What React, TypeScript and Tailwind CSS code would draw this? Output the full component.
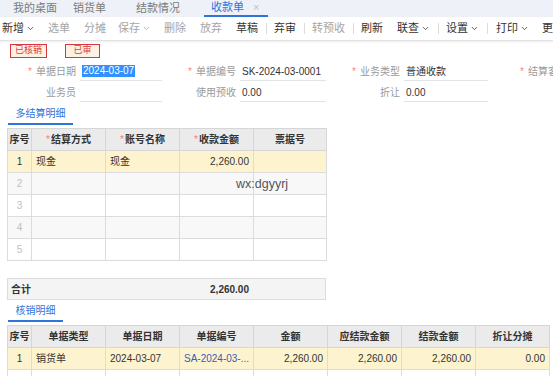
import { ChevronDown } from "lucide-react";

const tabs = [
  { label: "我的桌面", ml: "ml-[13px]" },
  { label: "销货单", ml: "ml-[16px]" },
  { label: "结款情况", ml: "ml-[30px]" },
];

type Tool = { label: string; ml: string; dim?: boolean; caret?: boolean; sep?: boolean };

const tools: Tool[] = [
  { label: "新增", ml: "ml-[2px]", caret: true },
  { label: "选单", ml: "ml-[13px]", dim: true },
  { label: "分摊", ml: "ml-[14px]", dim: true },
  { label: "保存", ml: "ml-[12px]", dim: true, caret: true },
  { label: "删除", ml: "ml-[13px]", dim: true },
  { label: "放弃", ml: "ml-[14px]", dim: true },
  { label: "草稿", ml: "ml-[14px]", sep: true },
  { label: "弃审", ml: "ml-[7px]", sep: true },
  { label: "转预收", ml: "ml-[7px]", dim: true, sep: true },
  { label: "刷新", ml: "ml-[7px]" },
  { label: "联查", ml: "ml-[14px]", caret: true, sep: true },
  { label: "设置", ml: "ml-[7px]", caret: true, sep: true },
  { label: "打印", ml: "ml-[8px]", caret: true },
  { label: "更多", ml: "ml-[13px]" },
];

function Field({ label, value, required, labelW, fieldW, selected }: {
  label: string;
  value?: string;
  required?: boolean;
  labelW: string;
  fieldW: string;
  selected?: boolean;
}) {
  return (
    <div className="flex items-center">
      <div className={`${labelW} shrink-0 pr-[4px] text-right text-[10px] text-[#9a9a9a]`}>
        {required && <span className="mr-[4px] text-[#f28b8b]">*</span>}
        {label}
      </div>
      <div className={`${fieldW} shrink-0 h-[19px] flex items-center border-b border-[#e3e3e3] pl-[2px] text-[10px] text-[#333]`}>
        {selected ? (
          <span className="bg-[#3390ff] px-[1px] text-white leading-[12px]">{value}</span>
        ) : (
          value
        )}
      </div>
    </div>
  );
}

function Head({ children, required }: { children: string; required?: boolean }) {
  return (
    <th className="h-[22px] border border-[#d6d6d6] bg-[#ebebeb] text-center text-[10px] font-bold text-[#333]">
      {required && <span className="mr-[1px] font-normal text-[#f08080]">*</span>}
      {children}
    </th>
  );
}

const cell = "h-[22px] border border-[#dcdcdc] px-[4px] text-[10px] whitespace-nowrap";

export default function App() {
  return (
    <div className="relative h-[376px] w-[553px] overflow-hidden bg-white font-['Liberation_Sans','Noto_Sans_CJK_SC',sans-serif] text-[10px] text-[#333]">
      {/* tab bar */}
      <div className="flex h-[17px] items-stretch bg-[#eef2f8] text-[11px] text-[#7a7a7a] whitespace-nowrap">
        {tabs.map((t) => (
          <span key={t.label} className={`${t.ml} flex items-center`}>
            {t.label}
          </span>
        ))}
        <span className="ml-[24px] flex w-[64px] items-center border-b-2 border-[#2f74d8] pl-[7px] text-[#2f74d8]">
          收款单
          <span className="ml-[9px] text-[11px] text-[#b8c2d0]">×</span>
        </span>
      </div>

      {/* toolbar */}
      <div className="flex h-[24px] items-center whitespace-nowrap border-b border-[#e2e2e2] text-[11px] shadow-[0_1px_2px_rgba(0,0,0,0.07)]">
        {tools.map((t) => (
          <div key={t.label} className={`${t.ml} flex items-center`}>
            <span className={t.dim ? "text-[#a5a5a5]" : "text-[#333]"}>{t.label}</span>
            {t.caret && <ChevronDown size={9} strokeWidth={2.5} className={`ml-[2px] ${t.dim ? "text-[#b0b0b0]" : "text-[#555]"}`} />}
            {t.sep && <span className="ml-[8px] h-[11px] w-px bg-[#dcdcdc]" />}
          </div>
        ))}
      </div>

      {/* status badges */}
      <div className="mt-[3px] flex h-[14px] items-stretch text-[9px] text-[#e03a3a]">
        <span className="ml-[10px] flex w-[37px] items-center justify-center border-[1.5px] border-[#d9363e] bg-[#fdf1e4]">已核销</span>
        <span className="ml-[18px] flex w-[35px] items-center justify-center border-[1.5px] border-[#d9363e] bg-[#fdf1e4]">已审</span>
      </div>

      {/* form */}
      <div className="mt-[4px] flex flex-col gap-[2px] whitespace-nowrap">
        <div className="flex">
          <Field label="单据日期" value="2024-03-07" required labelW="w-[80px]" fieldW="w-[82px]" selected />
          <Field label="单据编号" value="SK-2024-03-0001" required labelW="w-[78px]" fieldW="w-[86px]" />
          <Field label="业务类型" value="普通收款" required labelW="w-[78px]" fieldW="w-[84px]" />
          <Field label="结算客户" required labelW="w-[84px]" fieldW="w-[86px]" />
        </div>
        <div className="flex">
          <Field label="业务员" labelW="w-[80px]" fieldW="w-[82px]" />
          <Field label="使用预收" value="0.00" labelW="w-[78px]" fieldW="w-[86px]" />
          <Field label="折让" value="0.00" labelW="w-[78px]" fieldW="w-[84px]" />
        </div>
      </div>

      {/* 多结算明细 */}
      <div className="mt-[2px] flex h-[21px] pl-[8px]">
        <span className="flex w-[65px] items-center justify-center border-b-2 border-[#2f74d8] text-[#2f74d8]">多结算明细</span>
      </div>

      <table className="ml-[7px] mt-[3px] w-[319px] table-fixed border-collapse">
        <colgroup>
          <col className="w-[24px]" />
          <col className="w-[74px]" />
          <col className="w-[74px]" />
          <col className="w-[74px]" />
          <col className="w-[73px]" />
        </colgroup>
        <thead>
          <tr>
            <Head>序号</Head>
            <Head required>结算方式</Head>
            <Head required>账号名称</Head>
            <Head required>收款金额</Head>
            <Head>票据号</Head>
          </tr>
        </thead>
        <tbody>
          <tr className="bg-[#fdf3cf]">
            <td className={`${cell} text-center`}>1</td>
            <td className={cell}>现金</td>
            <td className={cell}>现金</td>
            <td className={`${cell} text-right`}>2,260.00</td>
            <td className={cell}></td>
          </tr>
          {[2, 3, 4, 5].map((n) => (
            <tr key={n} className={n % 2 === 0 ? "bg-[#f8f8f8]" : "bg-white"}>
              <td className={`${cell} text-center text-[#c0c0c0]`}>{n}</td>
              <td className={cell}></td>
              <td className={cell}></td>
              <td className={cell}></td>
              <td className={cell}></td>
            </tr>
          ))}
        </tbody>
      </table>

      {/* 合计 */}
      <div className="ml-[7px] mt-[17px] flex h-[22px] w-[319px] items-center border border-[#dcdcdc] bg-[#f4f4f4] font-bold">
        <span className="pl-[3px]">合计</span>
        <span className="ml-auto mr-[76px]">2,260.00</span>
      </div>

      {/* 核销明细 */}
      <div className="mt-[1px] flex h-[21px] pl-[8px]">
        <span className="flex w-[55px] items-center justify-center border-b-2 border-[#2f74d8] text-[#2f74d8]">核销明细</span>
      </div>

      <table className="ml-[7px] mt-[3px] w-[542px] table-fixed border-collapse">
        <colgroup>
          <col className="w-[24px]" />
          <col className="w-[74px]" />
          <col className="w-[74px]" />
          <col className="w-[74px]" />
          <col className="w-[74px]" />
          <col className="w-[74px]" />
          <col className="w-[74px]" />
          <col className="w-[74px]" />
        </colgroup>
        <thead>
          <tr>
            <Head>序号</Head>
            <Head>单据类型</Head>
            <Head>单据日期</Head>
            <Head>单据编号</Head>
            <Head>金额</Head>
            <Head>应结款金额</Head>
            <Head>结款金额</Head>
            <Head>折让分摊</Head>
          </tr>
        </thead>
        <tbody>
          <tr className="bg-[#fdf3cf]">
            <td className={`${cell} text-center`}>1</td>
            <td className={cell}>销货单</td>
            <td className={cell}>2024-03-07</td>
            <td className={`${cell} text-[#3b5bb5]`}>SA-2024-03-...</td>
            <td className={`${cell} text-right`}>2,260.00</td>
            <td className={`${cell} text-right`}>2,260.00</td>
            <td className={`${cell} text-right`}>2,260.00</td>
            <td className={`${cell} text-right`}>0.00</td>
          </tr>
          <tr className="bg-white">
            {Array.from({ length: 8 }).map((_, i) => (
              <td key={i} className={cell}></td>
            ))}
          </tr>
        </tbody>
      </table>

      {/* watermark */}
      <span className="absolute left-[236px] top-[175px] text-[12.5px] text-[#555]">wx:dgyyrj</span>
    </div>
  );
}
